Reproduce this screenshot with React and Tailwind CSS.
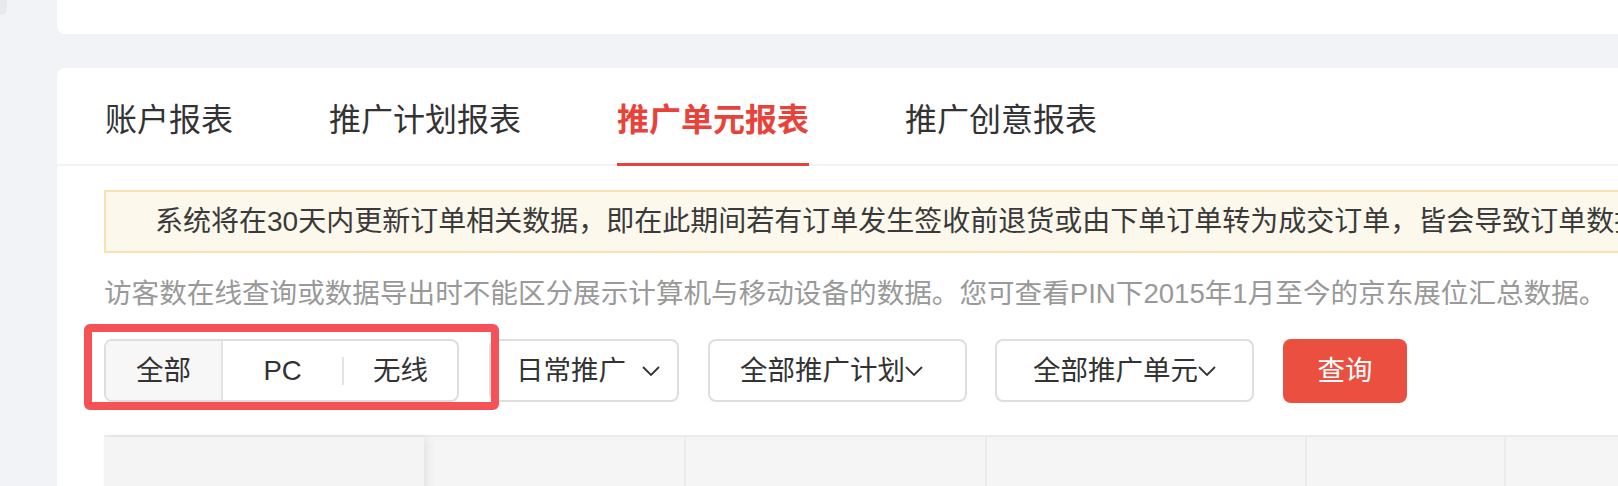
import React from 'react';

const tabs = ['账户报表', '推广计划报表', '推广单元报表', '推广创意报表'];

const Chevron = ({ w = 18 }) => (
  <svg width={w} height="10" viewBox="0 0 18 10" fill="none" className="shrink-0">
    <polyline points="1,1 9,9 17,1" stroke="#333" strokeWidth="1.8" fill="none" />
  </svg>
);

const App = () => {
  return (
    <div className="flex h-[486px] w-full overflow-hidden bg-[#f2f3f6] font-['Liberation_Sans','Noto_Sans_CJK_SC',sans-serif] text-[#333]">
      {/* left strip */}
      <div className="w-[57px] shrink-0">
        <div className="h-[15px] w-[7px] rounded-br-[6px] bg-[#e8e9ed]"></div>
      </div>

      <div className="flex w-[1700px] shrink-0 flex-col gap-[34px]">
        {/* top card */}
        <div className="h-[34px] shrink-0 rounded-bl-[8px] bg-white"></div>

        {/* report card */}
        <div className="flex-1 rounded-tl-[8px] bg-white">
          {/* tabs */}
          <div className="flex h-[98px] gap-[96px] border-b-2 border-[#f3f3f3] pl-[48px]">
            {tabs.map((t, i) => (
              <div
                key={t}
                className={`relative flex h-full items-center pt-[8px] text-[32px] leading-none ${
                  i === 2 ? 'font-bold text-[#e8433a]' : 'text-[#333]'
                }`}
              >
                {t}
                {i === 2 && <span className="absolute -bottom-[2px] left-0 right-0 h-[3px] bg-[#e8433a]"></span>}
              </div>
            ))}
          </div>

          <div className="pl-[47px]">
            {/* notice */}
            <div className="mt-[24px] flex h-[63px] items-center overflow-hidden whitespace-nowrap border-2 border-[#f9e1b3] bg-[#fcf8ec] pl-[49px] text-[28px] leading-none text-[#3a3a3a]">
              系统将在30天内更新订单相关数据，即在此期间若有订单发生签收前退货或由下单订单转为成交订单，皆会导致订单数据发生变化。
            </div>

            {/* hint */}
            <div className="mt-[21px] whitespace-nowrap text-[27.6px] leading-[40px] text-[#999]">
              访客数在线查询或数据导出时不能区分展示计算机与移动设备的数据。您可查看PIN下2015年1月至今的京东展位汇总数据。
            </div>

            {/* filters */}
            <div className="relative mt-[25px] flex h-[63px] items-stretch text-[27.5px] leading-none">
              <div className="flex w-[355px] overflow-hidden rounded-[8px] border-2 border-[#dedede]">
                <div className="flex w-[117px] items-center justify-center border-r-2 border-[#e3e3e3] bg-[#f7f7f7]">全部</div>
                <div className="flex w-[119px] items-center justify-center">PC</div>
                <div className="flex items-center">
                  <span className="h-[28px] w-[2px] bg-[#e3e3e3]"></span>
                </div>
                <div className="flex flex-1 items-center justify-center">无线</div>
              </div>

              <div className="ml-[30px] flex w-[190px] items-center rounded-[8px] border-2 border-[#dedede] pl-[25px]">
                <span>日常推广</span>
                <span className="ml-[15px]">
                  <Chevron w={20} />
                </span>
              </div>

              <div className="ml-[29px] flex w-[259px] items-center justify-center rounded-[8px] border-2 border-[#dedede] pr-[12px]">
                <span>全部推广计划</span>
                <Chevron />
              </div>

              <div className="ml-[28px] flex w-[259px] items-center justify-center rounded-[8px] border-2 border-[#dedede]">
                <span>全部推广单元</span>
                <Chevron />
              </div>

              <button className="ml-[29px] flex h-[64px] w-[124px] items-center justify-center rounded-[8px] bg-[#eb4f3f] text-white">
                查询
              </button>

              {/* annotation box */}
              <div className="pointer-events-none absolute -left-[20px] -top-[15px] h-[86px] w-[415px] rounded-[6px] border-[8px] border-[#f55257]"></div>
            </div>

            {/* table header */}
            <div className="mt-[33px] flex h-[60px] border-t-2 border-[#ececec] bg-[#f5f5f5]">
              <div className="relative z-10 w-[320px] bg-[#f4f4f4] shadow-[4px_0_8px_rgba(0,0,0,0.07)]"></div>
              <div className="w-[260px]"></div>
              <div className="w-[301px] border-l-2 border-[#ebebeb]"></div>
              <div className="w-[320px] border-l-2 border-[#ebebeb]"></div>
              <div className="w-[199px] border-l-2 border-[#ebebeb]"></div>
              <div className="flex-1 border-l-2 border-[#ebebeb]"></div>
            </div>
          </div>
        </div>
      </div>
    </div>
  );
};

export default App;
